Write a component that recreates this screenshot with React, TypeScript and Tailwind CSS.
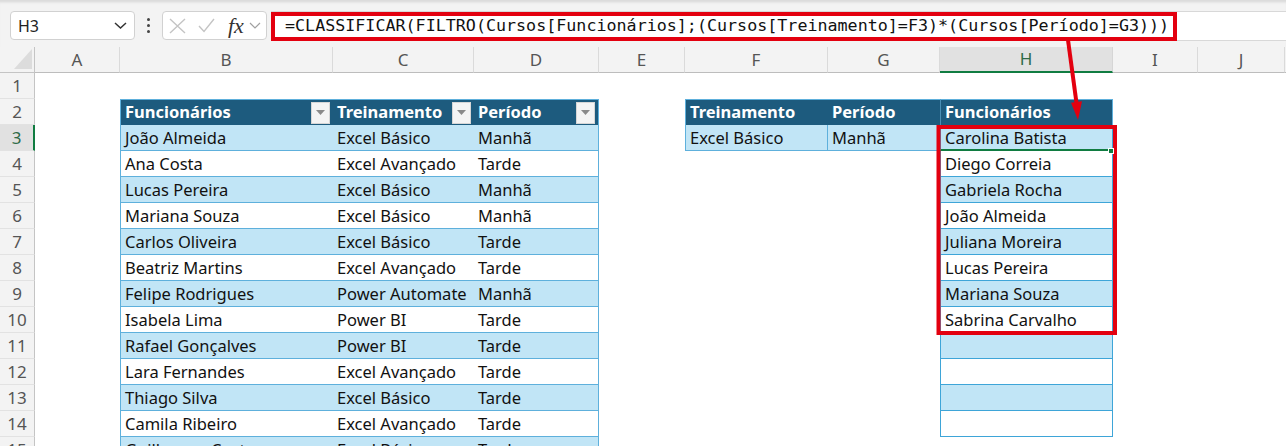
import React from 'react'

const cols = ['A', 'B', 'C', 'D', 'E', 'F', 'G', 'H', 'I', 'J']

const cursos = [
  ['João Almeida', 'Excel Básico', 'Manhã'],
  ['Ana Costa', 'Excel Avançado', 'Tarde'],
  ['Lucas Pereira', 'Excel Básico', 'Manhã'],
  ['Mariana Souza', 'Excel Básico', 'Manhã'],
  ['Carlos Oliveira', 'Excel Básico', 'Tarde'],
  ['Beatriz Martins', 'Excel Avançado', 'Tarde'],
  ['Felipe Rodrigues', 'Power Automate', 'Manhã'],
  ['Isabela Lima', 'Power BI', 'Tarde'],
  ['Rafael Gonçalves', 'Power BI', 'Tarde'],
  ['Lara Fernandes', 'Excel Avançado', 'Tarde'],
  ['Thiago Silva', 'Excel Básico', 'Tarde'],
  ['Camila Ribeiro', 'Excel Avançado', 'Tarde'],
  ['Guilherme Costa', 'Excel Básico', 'Tarde'],
]

const resultado = [
  'Carolina Batista',
  'Diego Correia',
  'Gabriela Rocha',
  'João Almeida',
  'Juliana Moreira',
  'Lucas Pereira',
  'Mariana Souza',
  'Sabrina Carvalho',
]

const FORMULA = '=CLASSIFICAR(FILTRO(Cursos[Funcionários];(Cursos[Treinamento]=F3)*(Cursos[Período]=G3)))'

function FilterButton() {
  return (
    <span className="ml-auto mr-[3px] flex h-[22px] w-[19px] items-center justify-center border border-[#d6d6d6] bg-[#f4f4f4]">
      <svg width="9" height="5" viewBox="0 0 9 5">
        <path d="M0 0 L9 0 L4.5 5 Z" fill="#8a8a8a" />
      </svg>
    </span>
  )
}

const base = 'flex h-[26px] items-center pt-[2px] px-[4px] text-[16.5px] text-[#111] whitespace-nowrap overflow-hidden'
const head = 'flex h-[26px] items-center pl-[4px] text-[16.5px] font-bold text-white bg-[#1d5b7e] whitespace-nowrap overflow-hidden'

// returns class + content for a sheet cell (row r, column index c: 0=A)
function cell(r: number, c: number): { cls: string; text?: string; filter?: boolean } {
  const light = r % 2 === 1
  // left table: B..D rows 2..15
  if (r === 2 && c >= 1 && c <= 3) {
    const edge = c === 1 ? ' border-l border-[#5eb0dc]' : c === 3 ? ' border-r border-[#5eb0dc]' : ''
    return { cls: head + ' border-t border-[#5eb0dc]' + edge, text: ['Funcionários', 'Treinamento', 'Período'][c - 1], filter: true }
  }
  if (r >= 3 && c >= 1 && c <= 3) {
    const row = cursos[r - 3]
    const bg = light ? ' bg-[#c1e5f6]' : ' bg-white'
    const edge = c === 1 ? ' border-l border-l-[#5eb0dc]' : c === 3 ? ' border-r border-r-[#5eb0dc]' : ''
    return { cls: base + bg + ' border-b border-b-[#5eb0dc]' + edge, text: row ? row[c - 1] : '' }
  }
  // criteria table F..G, result H
  if (r === 2 && c >= 5 && c <= 7) {
    const edge = c === 5 ? ' border-l border-[#5eb0dc]' : c === 7 ? ' border-l border-l-[#4a8fb5] border-r border-r-[#5eb0dc]' : ''
    return { cls: head + ' border-t border-t-[#5eb0dc]' + edge, text: ['Treinamento', 'Período', 'Funcionários'][c - 5] }
  }
  if (r === 3 && (c === 5 || c === 6)) {
    const edge = c === 5 ? ' border-l border-l-[#5eb0dc] border-r border-r-[#5eb0dc]' : ''
    return { cls: base + ' bg-[#c1e5f6] border-b border-b-[#5eb0dc]' + edge, text: c === 5 ? 'Excel Básico' : 'Manhã' }
  }
  if (r >= 3 && r <= 14 && c === 7) {
    const bg = light ? ' bg-[#c1e5f6]' : ' bg-white'
    const bottom = r === 3 ? ' border-b-2 border-b-[#107c41]' : ' border-b border-b-[#3ea5d8]'
    return { cls: base + bg + ' border-l border-l-[#3ea5d8] border-r border-r-[#3ea5d8]' + bottom, text: resultado[r - 3] ?? '' }
  }
  return { cls: 'h-[26px] bg-white' }
}

export default function App() {
  const rows = Array.from({ length: 15 }, (_, i) => i + 1)

  return (
    <div className="relative h-[446px] w-[1286px] overflow-hidden bg-white font-['Noto_Sans',sans-serif]">
      {/* Formula bar */}
      <div className="flex h-[47px] items-start gap-0 border-t border-[#dcdcdc] bg-[#f3f3f3] pt-[10px] shadow-[inset_0_3px_3px_-2px_rgba(0,0,0,0.12)]">
        <div className="ml-[10px] flex h-[29px] w-[125px] items-center justify-between rounded-[4px] border border-[#d1d1d1] bg-white pl-[7px] pr-[7px]">
          <span className="text-[16px] text-[#222]">H3</span>
          <svg width="13" height="7" viewBox="0 0 13 7">
            <path d="M1 1 L6.5 6 L12 1" fill="none" stroke="#333" strokeWidth="1.5" />
          </svg>
        </div>
        <div className="flex h-[29px] w-[27px] flex-col items-center justify-center gap-[3px]">
          <span className="h-[3px] w-[3px] rounded-full bg-[#444]" />
          <span className="h-[3px] w-[3px] rounded-full bg-[#444]" />
          <span className="h-[3px] w-[3px] rounded-full bg-[#444]" />
        </div>
        <div className="flex h-[29px] w-[105px] items-center rounded-[4px] border border-[#d1d1d1] bg-white pl-[6px]">
          <svg width="17" height="16" viewBox="0 0 17 16">
            <path d="M1 1 L16 15 M16 1 L1 15" stroke="#c4c4c4" strokeWidth="1.4" />
          </svg>
          <svg className="ml-[12px]" width="17" height="15" viewBox="0 0 17 15">
            <path d="M1 8 L6 13.5 L16 1" fill="none" stroke="#c4c4c4" strokeWidth="1.4" />
          </svg>
          <span className="ml-[13px] font-['Liberation_Serif',serif] text-[22px] italic leading-none text-[#333]">fx</span>
          <svg className="ml-[5px]" width="12" height="7" viewBox="0 0 12 7">
            <path d="M1 1 L6 6 L11 1" fill="none" stroke="#a0a0a0" strokeWidth="1.2" />
          </svg>
        </div>
        <div className="ml-[4px] flex h-[30px] flex-1 items-center border-y border-[#d8d8d8] bg-white">
          <div className="flex h-[29px] w-[906px] items-center border-4 border-[#e3000f] pl-[10px] font-['DejaVu_Sans_Mono',monospace] text-[16.7px] text-[#111] whitespace-nowrap">
            {FORMULA}
          </div>
        </div>
      </div>

      {/* Sheet */}
      <div className="grid grid-cols-[35px_85px_213px_141px_125px_86px_143px_112px_173px_85px_87px_1fr]">
        {/* column headers */}
        <div className="relative h-[26px] border-b border-r border-[#c4c4c4] bg-[#f3f3f3]">
          <svg className="absolute bottom-[3px] right-[2px]" width="18" height="20" viewBox="0 0 18 20">
            <path d="M18 0 L18 20 L0 20 Z" fill="#dcdcdc" />
          </svg>
        </div>
        {cols.map((c) =>
          c === 'H' ? (
            <div key={c} className="flex h-[26px] items-center justify-center border-b-2 border-r border-b-[#107c41] border-r-[#d6d6d6] bg-[#e1e1e1] text-[17px] text-[#2f6b48]">
              {c}
            </div>
          ) : (
            <div key={c} className="flex h-[26px] items-center justify-center border-b border-r border-b-[#bdbdbd] border-r-[#dadada] bg-[#f3f3f3] text-[17px] text-[#555]">
              {c}
            </div>
          )
        )}
        <div className="h-[26px] border-b border-[#bdbdbd] bg-[#f3f3f3]" />

        {rows.map((r) => (
          <React.Fragment key={r}>
            {r === 3 ? (
              <div className="flex h-[26px] items-center justify-center border-b border-r-2 border-b-[#e2e2e2] border-r-[#107c41] bg-[#e1e1e1] text-[17px] text-[#2f6b48]">
                {r}
              </div>
            ) : (
              <div className="flex h-[26px] items-center justify-center border-b border-r border-b-[#e2e2e2] border-r-[#c4c4c4] bg-[#f3f3f3] text-[17px] text-[#555]">
                {r}
              </div>
            )}
            {cols.map((_, ci) => {
              const { cls, text, filter } = cell(r, ci)
              return (
                <div key={ci} className={cls}>
                  {text}
                  {filter && <FilterButton />}
                </div>
              )
            })}
            <div className="h-[26px] bg-white" />
          </React.Fragment>
        ))}
      </div>

      {/* annotation: red box on the spilled result and arrow from the formula */}
      <svg className="pointer-events-none absolute left-0 top-0" width="1286" height="446">
        <rect x="938.5" y="127" width="176.5" height="206" fill="none" stroke="#e3000f" strokeWidth="4" />
        <line x1="1068" y1="40" x2="1076.5" y2="103" stroke="#e3000f" strokeWidth="4" />
        <polygon points="1071,102.7 1082,101.3 1078,120" fill="#e3000f" />
      </svg>
      {/* fill handle of active cell */}
      <span className="pointer-events-none absolute left-[1108px] top-[148px] h-[6px] w-[6px] border border-white bg-[#107c41]" />
    </div>
  )
}
